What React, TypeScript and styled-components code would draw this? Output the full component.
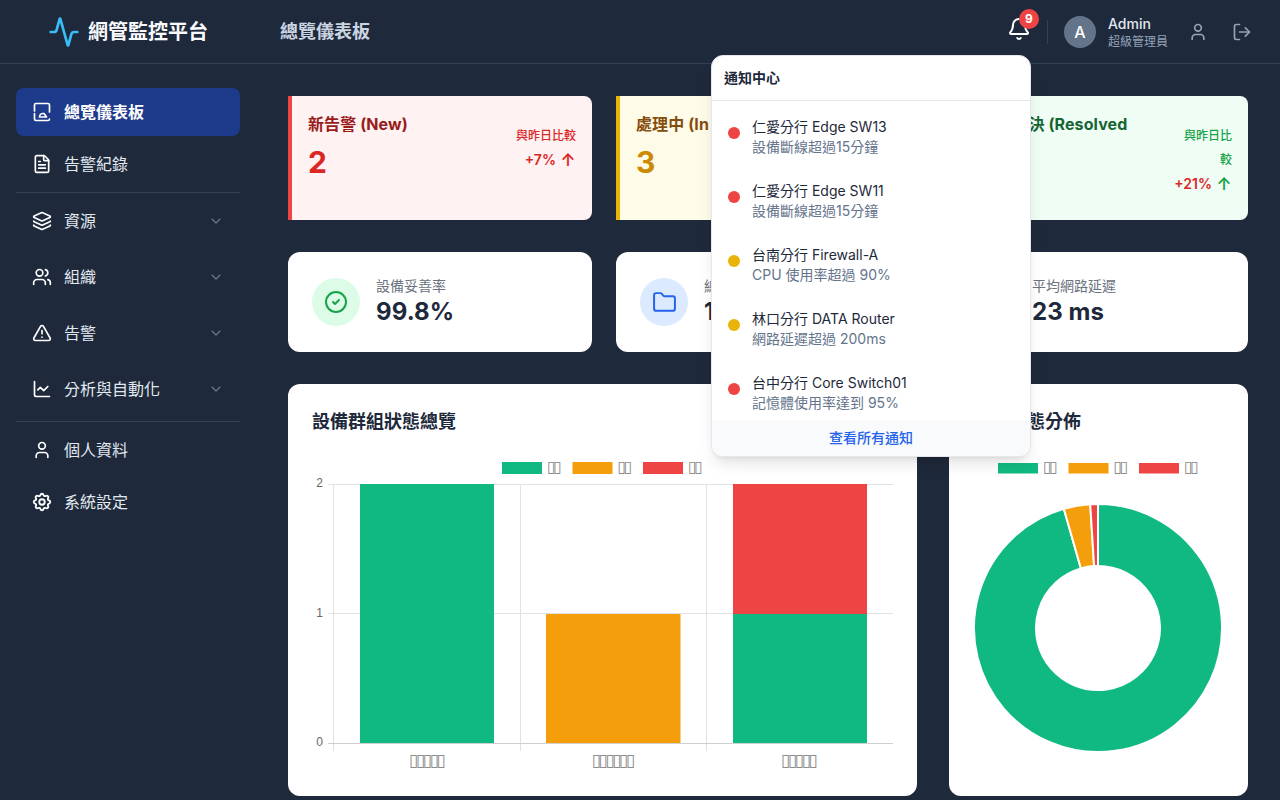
import React from 'react';
import styled, { createGlobalStyle } from 'styled-components';
import { Activity, Bell, User, LogOut, FileText, Layers, Users, TriangleAlert, ChartLine, ChevronDown, CircleCheck, Folder, Clock } from 'lucide-react';
import { TbSettings } from 'react-icons/tb';

const Global = createGlobalStyle`
  html, body { margin: 0; padding: 0; height: 100%; overflow: hidden; background: #1e293b; }
  body { font-family: Inter, "Noto Sans CJK TC", sans-serif; }
  * { box-sizing: border-box; }
`;

const Shell = styled.div`
  width: 1280px; height: 800px; display: flex; flex-direction: column; background: #1e293b; position: relative; overflow: hidden;
`;
const Header = styled.header`
  height: 64px; flex: none; display: flex; align-items: center; border-bottom: 1px solid #334155; padding-right: 28px;
`;
const Brand = styled.div`
  width: 256px; display: flex; align-items: center; justify-content: center; gap: 8px; color: #f8fafc; font-size: 20px; line-height: 28px; font-weight: 700;
  svg { color: #38bdf8; }
`;
const PageTitle = styled.h1`
  margin: 0 0 0 24px; font-size: 18px; line-height: 28px; font-weight: 600; color: #cbd5e1; flex: 1;
`;
const BellWrap = styled.div`
  position: relative; width: 24px; height: 24px; color: #fff; margin: 0 16px 6px 0;
`;
const Badge = styled.span`
  position: absolute; top: -8px; right: -8px; width: 20px; height: 20px; border-radius: 50%; background: #ef4444; color: #fff;
  font-size: 12px; font-weight: 700; display: flex; align-items: center; justify-content: center;
`;
const Divider = styled.div`
  width: 1px; height: 24px; background: #334155; margin-right: 16px;
`;
const Avatar = styled.div`
  width: 32px; height: 32px; border-radius: 50%; background: #64748b; color: #fff; font-size: 16px; font-weight: 500;
  display: flex; align-items: center; justify-content: center; margin-right: 12px;
`;
const UserInfo = styled.div`
  display: flex; flex-direction: column; margin-right: 20px;
`;
const UserName = styled.span`
  font-size: 14px; line-height: 20px; font-weight: 500; color: #e2e8f0;
`;
const UserRole = styled.span`
  font-size: 12px; line-height: 16px; color: #94a3b8;
`;
const HeaderIcon = styled.span<{ $gap?: number }>`
  display: flex; color: #94a3b8; margin-right: ${p => p.$gap ?? 0}px;
`;

const Body = styled.div`
  flex: 1; display: flex; min-height: 0;
`;
const Sidebar = styled.nav`
  width: 256px; flex: none; padding: 24px 16px;
`;
const NavItem = styled.a<{ $active?: boolean }>`
  display: flex; align-items: center; height: 48px; padding: 0 16px; gap: 12px; border-radius: 8px;
  color: ${p => (p.$active ? '#fff' : '#e2e8f0')};
  background: ${p => (p.$active ? '#1e3a8a' : 'transparent')};
  font-size: 16px; line-height: 24px; font-weight: ${p => (p.$active ? 600 : 400)};
  margin-bottom: 4px;
  svg.main { color: #fff; flex: none; }
  svg.chev { margin-left: auto; color: #64748b; }
`;
const NavGroup = styled(NavItem)`
  height: 56px; margin-bottom: 0;
`;
const NavRule = styled.hr<{ $top?: number; $bottom?: number }>`
  border: 0; border-top: 1px solid #334155; margin: ${p => p.$top ?? 0}px 0 ${p => p.$bottom ?? 0}px;
`;
const GearIcon = styled(TbSettings)`
  margin: 0 -1px;
`;

const Main = styled.main`
  flex: 1; padding: 32px 32px 0; display: flex; flex-direction: column; gap: 32px; min-width: 0;
`;
const Row3 = styled.div`
  display: grid; grid-template-columns: repeat(3, 1fr); gap: 24px;
`;
const AlertCard = styled.div<{ $bg: string; $bar?: string }>`
  height: 124px; background: ${p => p.$bg}; border-radius: 0 8px 8px 0; padding: 16px;
  border-left: 4px solid ${p => p.$bar};
  display: flex; justify-content: space-between; gap: 8px;
`;
const AlertLeft = styled.div`
  display: flex; flex-direction: column; min-width: 0;
`;
const AlertName = styled.div<{ $c: string }>`
  font-size: 16px; line-height: 24px; font-weight: 700; color: ${p => p.$c}; white-space: nowrap; letter-spacing: 0.1px;
`;
const AlertCount = styled.div<{ $c: string }>`
  font-size: 30px; line-height: 36px; font-weight: 700; color: ${p => p.$c}; margin-top: 8px;
`;
const AlertRight = styled.div`
  display: flex; flex-direction: column; align-items: flex-end; text-align: right; flex: none; margin-top: 12px;
`;
const Compare = styled.div<{ $c: string; $w?: number }>`
  font-size: 12px; line-height: 24px; font-weight: 500; color: ${p => p.$c}; width: ${p => p.$w ?? 60}px;
`;
const Trend = styled.div<{ $c: string }>`
  display: flex; align-items: center; gap: 4px; font-size: 14px; font-weight: 600; color: #dc2626; line-height: 24px;
`;
const TrendArrow = styled.span<{ $c: string }>`
  color: ${p => p.$c}; font-size: 17px; font-weight: 600; width: 16px; text-align: center;
`;
const StatCard = styled.div`
  height: 100px; background: #fff; border-radius: 12px; padding: 0 24px; display: flex; align-items: center; gap: 16px;
`;
const StatIcon = styled.div<{ $bg: string; $c: string }>`
  width: 48px; height: 48px; border-radius: 50%; background: ${p => p.$bg}; color: ${p => p.$c};
  display: flex; align-items: center; justify-content: center; flex: none;
`;
const StatText = styled.div`
  display: flex; flex-direction: column;
`;
const StatLabel = styled.div`
  font-size: 14px; line-height: 20px; color: #6b7280;
`;
const StatValue = styled.div`
  font-size: 24px; line-height: 32px; font-weight: 700; color: #1e293b; letter-spacing: 0.1px;
`;
const Charts = styled.div`
  display: grid; grid-template-columns: 629px 1fr; gap: 32px;
`;
const ChartCard = styled.section`
  height: 412px; background: #fff; border-radius: 12px; padding: 24px;
`;
const ChartTitle = styled.h2`
  margin: 0; font-size: 18px; line-height: 28px; font-weight: 600; color: #1e293b; height: 28px;
`;
const ChartSvg = styled.svg`
  display: block; margin-top: 20px; overflow: visible;
`;
const Tick = styled.text`
  font-family: "Liberation Sans", sans-serif; font-size: 12px; fill: #666;
`;
const Tofu = styled.text<{ $size: number; $track: number }>`
  font-family: "DejaVu Sans", sans-serif; font-size: ${p => p.$size}px; letter-spacing: ${p => p.$track}px; fill: #8c8c8c;
`;

const Panel = styled.div`
  position: absolute; left: 711px; top: 55px; width: 320px; height: 402px; background: #fff; border-radius: 12px; overflow: hidden;
  border: 1px solid #e5e7eb; box-shadow: 0 10px 15px -3px rgba(0,0,0,.1), 0 4px 6px -4px rgba(0,0,0,.1);
  display: flex; flex-direction: column;
`;
const PanelHead = styled.div`
  height: 45px; flex: none; padding: 0 12px; display: flex; align-items: center; font-size: 14px; line-height: 20px; font-weight: 600; color: #1e293b; border-bottom: 1px solid #e5e7eb;
`;
const PanelList = styled.div`
  flex: 1; min-height: 0; overflow: hidden;
`;
const Note = styled.div`
  height: 64px; padding: 0 16px; display: flex; align-items: center; gap: 12px;
`;
const Dot = styled.span<{ $c: string }>`
  width: 12px; height: 12px; border-radius: 50%; background: ${p => p.$c}; flex: none;
`;
const NoteText = styled.div`
  display: flex; flex-direction: column; margin-top: 8px;
`;
const NoteTitle = styled.div`
  font-size: 14px; line-height: 20px; font-weight: 400; color: #1e293b;
`;
const NoteSub = styled.div`
  font-size: 14px; line-height: 20px; color: #64748b;
`;
const PanelFoot = styled.div`
  height: 36px; flex: none; background: #f8fafc; color: #2563eb; font-size: 14px; line-height: 20px; font-weight: 500; display: flex; align-items: center; justify-content: center;
`;

const DashIcon = () => (
  <svg className="main" width="20" height="20" viewBox="0 0 20 20" fill="none" stroke="currentColor" strokeWidth="1.7" strokeLinecap="round" strokeLinejoin="round">
    <path d="M2.5 9V3A1.5 1.5 0 0 1 4 1.5h12A1.5 1.5 0 0 1 17.5 3v7" />
    <path d="M2.5 11.5V17A1.5 1.5 0 0 0 4 18.5h12a1.5 1.5 0 0 0 1.5-1.5" />
    <path d="M7.5 15a3.5 3.5 0 0 1 3.5-3.5h1l2.5 3.5H7.5z" />
  </svg>
);

const notes = [
  { c: '#ef4444', t: '仁愛分行 Edge SW13', s: '設備斷線超過15分鐘' },
  { c: '#ef4444', t: '仁愛分行 Edge SW11', s: '設備斷線超過15分鐘' },
  { c: '#eab308', t: '台南分行 Firewall-A', s: 'CPU 使用率超過 90%' },
  { c: '#eab308', t: '林口分行 DATA Router', s: '網路延遲超過 200ms' },
  { c: '#ef4444', t: '台中分行 Core Switch01', s: '記憶體使用率達到 95%' },
];

const GREEN = '#10b981', AMBER = '#f59e0b', RED = '#ef4444';
const tofu = (n: number) => '▯'.repeat(n);

const polar = (r: number, deg: number) => {
  const a = (deg - 90) * Math.PI / 180;
  return [125 + r * Math.cos(a), 172 + r * Math.sin(a)];
};
const arc = (a: number, b: number, R = 124, r = 62) => {
  const [x1, y1] = polar(R, a), [x2, y2] = polar(R, b), [x3, y3] = polar(r, b), [x4, y4] = polar(r, a);
  const l = b - a > 180 ? 1 : 0;
  return `M${x1} ${y1}A${R} ${R} 0 ${l} 1 ${x2} ${y2}L${x3} ${y3}A${r} ${r} 0 ${l} 0 ${x4} ${y4}Z`;
};

const Legend = ({ x, y, h }: { x: number; y: number; h: number }) => (
  <g>
    {[GREEN, AMBER, RED].map((c, i) => (
      <g key={c}>
        <rect x={x + i * 70.5} y={y} width={40} height={h} fill={c} />
        <Tofu $size={16} $track={-2.6} x={x + i * 70.5 + 45} y={16}>{tofu(2)}</Tofu>
      </g>
    ))}
  </g>
);

const BarChart = () => (
  <ChartSvg width={581} height={330} viewBox="0 0 581 330">
    <Legend x={190} y={6} h={12} />
    <g stroke="#e2e2e2" strokeWidth="1">
      {[21.5, 208.5, 394.5].map(x => <line key={x} x1={x} x2={x} y1={28} y2={295} />)}
      {[28.5, 157.5].map(y => <line key={y} x1={16} x2={581} y1={y} y2={y} />)}
    </g>
    <line x1={16} x2={581} y1={287.5} y2={287.5} stroke="#cfcfcf" />
    <rect x={48} y={28} width={134} height={259} fill={GREEN} />
    <rect x={234} y={158} width={134.5} height={129} fill={AMBER} />
    <rect x={421} y={158} width={134} height={129} fill={GREEN} />
    <rect x={421} y={28} width={134} height={130} fill={RED} />
    <Tick x={11} y={31} textAnchor="end">2</Tick>
    <Tick x={11} y={161} textAnchor="end">1</Tick>
    <Tick x={11} y={290} textAnchor="end">0</Tick>
    <Tofu $size={17} $track={-2.5} x={114} y={310} textAnchor="middle">{tofu(5)}</Tofu>
    <Tofu $size={17} $track={-2.5} x={300} y={310} textAnchor="middle">{tofu(6)}</Tofu>
    <Tofu $size={17} $track={-2.5} x={486} y={310} textAnchor="middle">{tofu(5)}</Tofu>
  </ChartSvg>
);

const Donut = () => (
  <ChartSvg width={251} height={330} viewBox="0 0 251 330">
    <Legend x={25} y={7} h={10.5} />
    <g stroke="#fff" strokeWidth="2">
      <path d={arc(0, 344)} fill={GREEN} />
      <path d={arc(344, 356.4)} fill={AMBER} />
      <path d={arc(356.4, 360)} fill={RED} />
    </g>
  </ChartSvg>
);

export default function App() {
  return (
    <Shell>
      <Global />
      <Header>
        <Brand><Activity size={32} strokeWidth={2} />網管監控平台</Brand>
        <PageTitle>總覽儀表板</PageTitle>
        <BellWrap><Bell size={24} /><Badge>9</Badge></BellWrap>
        <Divider />
        <Avatar>A</Avatar>
        <UserInfo><UserName>Admin</UserName><UserRole>超級管理員</UserRole></UserInfo>
        <HeaderIcon $gap={24}><User size={20} /></HeaderIcon>
        <HeaderIcon><LogOut size={20} /></HeaderIcon>
      </Header>
      <Body>
        <Sidebar>
          <NavItem $active><DashIcon />總覽儀表板</NavItem>
          <NavItem><FileText className="main" size={20} />告警紀錄</NavItem>
          <NavRule />
          <NavGroup><Layers className="main" size={20} />資源<ChevronDown className="chev" size={16} /></NavGroup>
          <NavGroup><Users className="main" size={20} />組織<ChevronDown className="chev" size={16} /></NavGroup>
          <NavGroup><TriangleAlert className="main" size={20} />告警<ChevronDown className="chev" size={16} /></NavGroup>
          <NavGroup><ChartLine className="main" size={20} />分析與自動化<ChevronDown className="chev" size={16} /></NavGroup>
          <NavRule $top={4} $bottom={4} />
          <NavItem><User className="main" size={20} />個人資料</NavItem>
          <NavItem><GearIcon className="main" size={22} />系統設定</NavItem>
        </Sidebar>
        <Main>
          <Row3>
            <AlertCard $bg="#fef2f2" $bar="#ef4444">
              <AlertLeft><AlertName $c="#991b1b">新告警 (New)</AlertName><AlertCount $c="#dc2626">2</AlertCount></AlertLeft>
              <AlertRight><Compare $c="#dc2626">與昨日比較</Compare><Trend $c="#dc2626">+7%<TrendArrow $c="#dc2626">↑</TrendArrow></Trend></AlertRight>
            </AlertCard>
            <AlertCard $bg="#fefce8" $bar="#eab308">
              <AlertLeft><AlertName $c="#854d0e">處理中 (In Progress)</AlertName><AlertCount $c="#ca8a04">3</AlertCount></AlertLeft>
            </AlertCard>
            <AlertCard $bg="#f0fdf4" $bar="#22c55e">
              <AlertLeft><AlertName $c="#166534">今日已解決 (Resolved</AlertName><AlertCount $c="#16a34a">9</AlertCount></AlertLeft>
              <AlertRight><Compare $c="#16a34a" $w={48}>與昨日比較</Compare><Trend $c="#dc2626">+21%<TrendArrow $c="#16a34a">↑</TrendArrow></Trend></AlertRight>
            </AlertCard>
          </Row3>
          <Row3>
            <StatCard><StatIcon $bg="#dcfce7" $c="#16a34a"><CircleCheck size={24} /></StatIcon><StatText><StatLabel>設備妥善率</StatLabel><StatValue>99.8%</StatValue></StatText></StatCard>
            <StatCard><StatIcon $bg="#dbeafe" $c="#2563eb"><Folder size={25} strokeWidth={1.9} /></StatIcon><StatText><StatLabel>總設備數</StatLabel><StatValue>128</StatValue></StatText></StatCard>
            <StatCard><StatIcon $bg="#e0e7ff" $c="#4f46e5"><Clock size={24} /></StatIcon><StatText><StatLabel>平均網路延遲</StatLabel><StatValue>23 ms</StatValue></StatText></StatCard>
          </Row3>
          <Charts>
            <ChartCard><ChartTitle>設備群組狀態總覽</ChartTitle><BarChart /></ChartCard>
            <ChartCard><ChartTitle>設備狀態分佈</ChartTitle><Donut /></ChartCard>
          </Charts>
        </Main>
      </Body>
      <Panel>
        <PanelHead>通知中心</PanelHead>
        <PanelList>
          {notes.map(n => (
            <Note key={n.t}><Dot $c={n.c} /><NoteText><NoteTitle>{n.t}</NoteTitle><NoteSub>{n.s}</NoteSub></NoteText></Note>
          ))}
        </PanelList>
        <PanelFoot>查看所有通知</PanelFoot>
      </Panel>
    </Shell>
  );
}
